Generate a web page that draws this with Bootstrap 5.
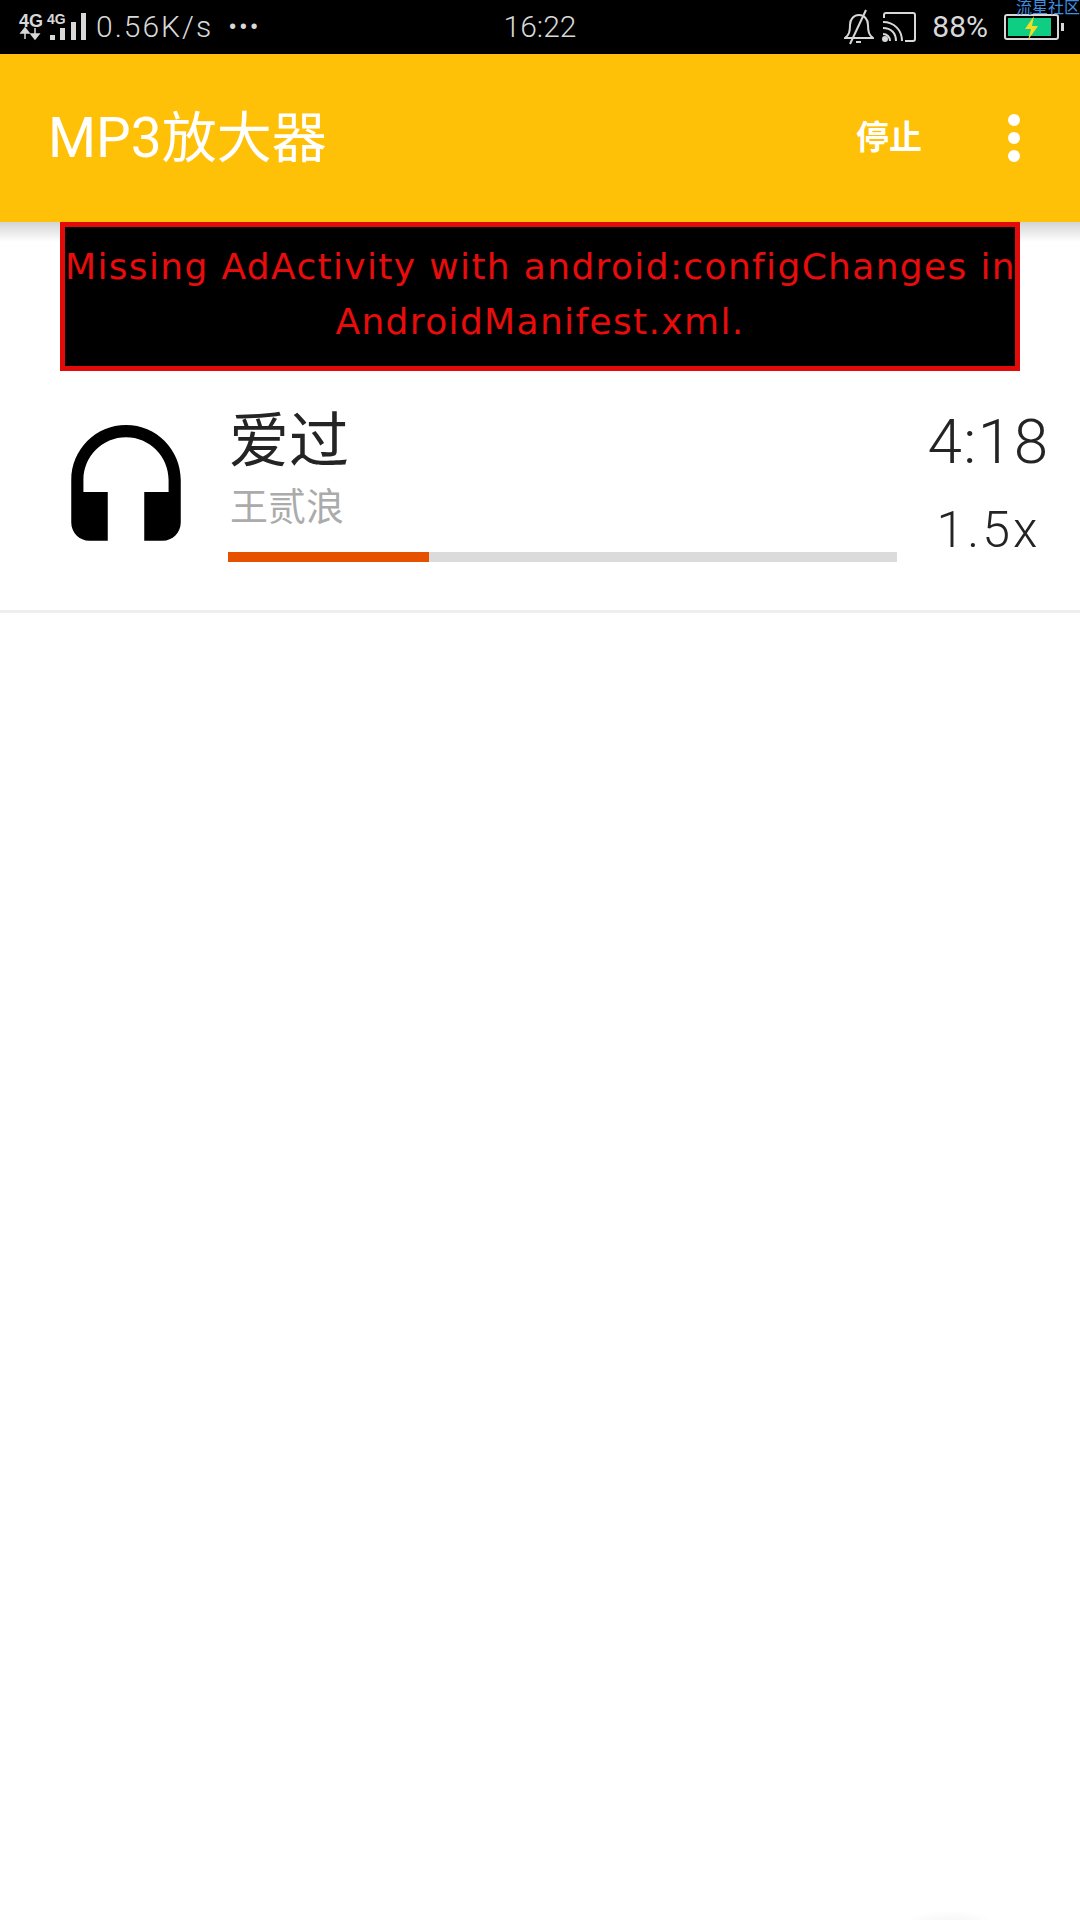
<!DOCTYPE html>
<html lang="zh-CN">

<head>
    <meta charset="UTF-8" />
    <meta name="viewport" content="width=device-width, initial-scale=1.0" />
    <title>MP3放大器</title>
    <link href="https://cdn.jsdelivr.net/npm/bootstrap@5.3.0/dist/css/bootstrap.min.css" rel="stylesheet" />
    <style>
        body {
            background-color: #fff;
            font-family: Roboto, "Noto Sans CJK SC", sans-serif;
        }

        .app-screen {
            height: 1920px;
            overflow: hidden;
        }

        .status-bar {
            height: 54px;
            background-color: #000;
            color: #d8d8d8;
            font-size: 30px;
            line-height: 54px;
        }

        .status-side {
            flex: 1 1 0;
            min-width: 0;
        }

        .status-clock {
            font-weight: 300;
        }

        .net-speed {
            margin-left: 10px;
            letter-spacing: 2px;
            font-weight: 300;
        }

        .net-dots {
            margin-left: 15px;
            font-size: 26px;
            letter-spacing: 2px;
        }

        .watermark {
            top: 0;
            right: 0;
            font-size: 16px;
            line-height: 16px;
            color: #3f8fe0;
            white-space: nowrap;
        }

        .app-bar {
            height: 168px;
            padding: 0 48px;
            background-color: #ffc107;
            color: #fff;
        }

        .app-title {
            font-size: 55px;
            font-weight: 400;
            margin: 0;
        }

        .stop-action {
            margin-right: 86px;
            font-size: 33px;
            font-weight: 700;
            color: #fff;
        }

        .more-dots {
            gap: 6px;
            margin-right: 12px;
        }

        .more-dots span {
            width: 12px;
            height: 12px;
            border-radius: 50%;
            background-color: #fff;
        }

        .bar-shadow {
            top: 0;
            left: 0;
            right: 0;
            height: 20px;
            background: linear-gradient(#d4d4d4, #fff);
        }

        .ad-banner {
            width: 960px;
            height: 149px;
            margin-left: 60px;
            padding-bottom: 6px;
            border: 5px solid #e30a0a;
            background-color: #000;
            color: #e80c0c;
            font-family: "DejaVu Sans", sans-serif;
            font-size: 36px;
            line-height: 55px;
            letter-spacing: 1.35px;
            text-align: center;
            white-space: nowrap;
        }

        .track-row {
            height: 242px;
            border-bottom: 3px solid #eee;
        }

        .track-icon {
            width: 146px;
            height: 146px;
            margin: 48px 29px 0 53px;
        }

        .track-main {
            width: 669px;
        }

        .track-title {
            margin: 35px 0 0 1px;
            font-size: 60px;
            line-height: 72px;
            color: #242424;
        }

        .track-artist {
            margin: 2px 0 0 2px;
            font-size: 38px;
            line-height: 54px;
            color: #ababab;
        }

        .track-progress {
            height: 10px;
            margin-top: 18px;
            border-radius: 0;
            background-color: #dbdbdb;
        }

        .track-progress .progress-bar {
            background-color: #e65100;
        }

        .track-side {
            width: 183px;
            color: #242424;
        }

        .track-time {
            margin-top: 33px;
            font-size: 62px;
            font-weight: 300;
            line-height: 75px;
            letter-spacing: 1.5px;
        }

        .track-speed {
            margin-top: 21px;
            font-size: 50px;
            line-height: 60px;
            letter-spacing: 3px;
            font-weight: 300;
        }

        .bottom-glow {
            left: 900px;
            bottom: -30px;
            width: 100px;
            height: 40px;
            border-radius: 50%;
            background: radial-gradient(closest-side, #f0f0f0, #fff);
        }
    </style>
</head>

<body>
    <div class="app-screen position-relative">
        <div class="status-bar d-flex align-items-center position-relative">
            <div class="status-side d-flex align-items-center">
                <svg class="status-signal ms-3" width="70" height="40" viewBox="0 0 70 40">
                    <text x="3" y="20" font-family="Liberation Sans" font-weight="700" font-size="18" fill="#d8d8d8">4G</text>
                    <text x="31" y="17" font-family="Liberation Sans" font-weight="700" font-size="14" fill="#d8d8d8">4G</text>
                    <path d="M9 32V25M9 21l-4 5h8zM19 21v7M19 32l-4-5h8z" stroke="#d8d8d8" stroke-width="1.5" fill="#d8d8d8" />
                    <rect x="34" y="28" width="5" height="5" fill="#d8d8d8" />
                    <rect x="44" y="21" width="5" height="12" fill="#d8d8d8" />
                    <rect x="55" y="15" width="5" height="18" fill="#d8d8d8" />
                    <rect x="65" y="6" width="5" height="27" fill="#d8d8d8" />
                </svg>
                <span class="net-speed">0.56K/s</span>
                <span class="net-dots">•••</span>
            </div>
            <div class="status-clock">16:22</div>
            <div class="status-side d-flex align-items-center justify-content-end">
                <svg width="30" height="36" viewBox="0 0 30 36" fill="none" stroke="#d8d8d8" stroke-width="2">
                    <path d="M1 29c4-3 5-6 5-13 0-6 4-10 9-10s9 4 9 10c0 7 1 10 5 13z" />
                    <path d="M22 1L6 35" />
                    <path d="M12 33h5" />
                </svg>
                <svg class="ms-2" width="34" height="30" viewBox="0 0 34 30" fill="none" stroke="#d8d8d8" stroke-width="2">
                    <path d="M2 6V3a2 2 0 0 1 2-2h27a2 2 0 0 1 2 2v24a2 2 0 0 1-2 2h-8" />
                    <path d="M1 10c11 0 19 8 19 19M1 16c8 0 13 5 13 13M1 22c4 0 7 3 7 7" />
                    <circle cx="3" cy="27" r="2" fill="#d8d8d8" />
                </svg>
                <span class="ms-3">88%</span>
                <svg class="ms-3 me-3" width="60" height="30" viewBox="0 0 60 30">
                    <rect x="1" y="3" width="53" height="24" rx="2" fill="none" stroke="#d8d8d8" stroke-width="2" />
                    <rect x="4" y="6" width="43" height="18" fill="#0fce83" />
                    <rect x="57" y="11" width="3" height="8" fill="#d8d8d8" />
                    <path d="M30 4l-9 13h6l-3 11 10-14h-6z" fill="#f2dd22" />
                </svg>
            </div>
            <div class="watermark position-absolute">流星社区</div>
        </div>

        <div class="app-bar d-flex align-items-center justify-content-between">
            <h1 class="app-title">MP3放大器</h1>
            <div class="d-flex align-items-center">
                <span class="stop-action">停止</span>
                <div class="more-dots d-flex flex-column"><span></span><span></span><span></span></div>
            </div>
        </div>

        <div class="position-relative">
            <div class="bar-shadow position-absolute"></div>
            <div class="ad-banner position-relative d-flex flex-column justify-content-center">
                <div>Missing AdActivity with android:configChanges in</div>
                <div>AndroidManifest.xml.</div>
            </div>
        </div>

        <div class="track-row d-flex">
            <svg class="track-icon flex-shrink-0" viewBox="0 0 24 24">
                <path d="M12 1c-4.97 0-9 4.03-9 9v7c0 1.66 1.34 3 3 3h3v-8H5v-2c0-3.87 3.13-7 7-7s7 3.13 7 7v2h-4v8h3c1.66 0 3-1.34 3-3v-7c0-4.97-4.03-9-9-9z" />
            </svg>
            <div class="track-main">
                <p class="track-title">爱过</p>
                <p class="track-artist">王贰浪</p>
                <div class="progress track-progress">
                    <div class="progress-bar" style="width: 30%"></div>
                </div>
            </div>
            <div class="track-side text-center">
                <div class="track-time">4:18</div>
                <div class="track-speed">1.5x</div>
            </div>
        </div>

        <div class="bottom-glow position-absolute"></div>
    </div>

    <script src="https://cdn.jsdelivr.net/npm/bootstrap@5.3.0/dist/js/bootstrap.bundle.min.js"></script>
</body>

</html>
